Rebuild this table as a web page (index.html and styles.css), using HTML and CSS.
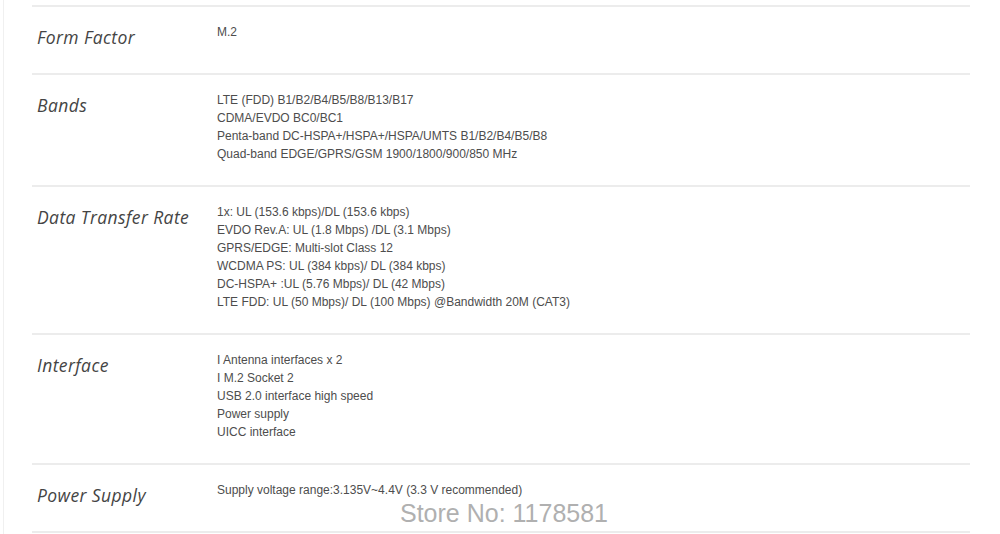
FILE: index.html
```html
<!DOCTYPE html>
<html>
<head>
<meta charset="utf-8">
<link rel="stylesheet" href="styles.css">
</head>
<body>
<div class="page">
  <div class="specs">
    <div class="row">
      <div class="label">Form Factor</div>
      <div class="value"><div>M.2</div></div>
    </div>
    <div class="row">
      <div class="label">Bands</div>
      <div class="value">
        <div>LTE (FDD) B1/B2/B4/B5/B8/B13/B17</div>
        <div>CDMA/EVDO BC0/BC1</div>
        <div>Penta-band DC-HSPA+/HSPA+/HSPA/UMTS B1/B2/B4/B5/B8</div>
        <div>Quad-band EDGE/GPRS/GSM 1900/1800/900/850 MHz</div>
      </div>
    </div>
    <div class="row">
      <div class="label">Data Transfer Rate</div>
      <div class="value">
        <div>1x: UL (153.6 kbps)/DL (153.6 kbps)</div>
        <div>EVDO Rev.A: UL (1.8 Mbps) /DL (3.1 Mbps)</div>
        <div>GPRS/EDGE: Multi-slot Class 12</div>
        <div>WCDMA PS: UL (384 kbps)/ DL (384 kbps)</div>
        <div>DC-HSPA+ :UL (5.76 Mbps)/ DL (42 Mbps)</div>
        <div>LTE FDD: UL (50 Mbps)/ DL (100 Mbps) @Bandwidth 20M (CAT3)</div>
      </div>
    </div>
    <div class="row">
      <div class="label">Interface</div>
      <div class="value">
        <div>I Antenna interfaces x 2</div>
        <div>I M.2 Socket 2</div>
        <div>USB 2.0 interface high speed</div>
        <div>Power supply</div>
        <div>UICC interface</div>
      </div>
    </div>
    <div class="row row-last">
      <div class="label">Power Supply</div>
      <div class="value"><div>Supply voltage range:3.135V~4.4V (3.3 V recommended)</div></div>
      <div class="watermark">Store No: 1178581</div>
    </div>
  </div>
</div>
</body>
</html>
```
FILE: styles.css
```css
html, body {
  margin: 0;
  padding: 0;
  background: #ffffff;
}
.page {
  margin-left: 3px;
  border-left: 1px solid #f0f0f0;
  min-height: 534px;
  padding: 5px 0 0 28px;
  box-sizing: border-box;
}
.specs {
  width: 938px;
}
.row {
  display: grid;
  grid-template-columns: 180px 1fr;
  border-top: 2px solid #ececec;
  padding: 16px 0 22px 5px;
  position: relative;
}
.row-last {
  border-bottom: 2px solid #ececec;
}
.label {
  font-family: "Open Sans", sans-serif;
  font-style: italic;
  font-size: 17.5px;
  letter-spacing: 0.4px;
  line-height: 28px;
  color: #444444;
}
.value {
  font-family: "Liberation Sans", Arial, sans-serif;
  font-size: 12px;
  line-height: 18px;
  color: #4d4d4d;
}
.watermark {
  position: absolute;
  left: 0;
  right: 0;
  top: 34px;
  text-align: center;
  font-family: "Liberation Sans", Arial, sans-serif;
  font-size: 25px;
  line-height: 28px;
  color: #b0b0b0;
  padding-left: 6px;
}
```
